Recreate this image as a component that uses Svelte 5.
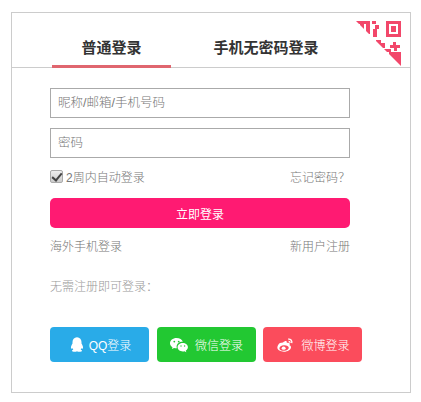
<script>
  let remember = $state(true);
  let tab = $state('normal');
</script>

<main class="page">
  <section class="card">
    <nav class="tabs">
      <button class="tab first" class:active={tab === 'normal'} onclick={() => (tab = 'normal')}>普通登录</button>
      <button class="tab second" class:active={tab === 'phone'} onclick={() => (tab = 'phone')}>手机无密码登录</button>
    </nav>

    <svg class="qr" width="46" height="46" viewBox="0 0 46 46" aria-hidden="true">
      <defs>
        <clipPath id="corner"><polygon points="0,0 46,0 46,46" /></clipPath>
      </defs>
      <g fill="#f2476a" clip-path="url(#corner)">
        <path d="M0 0h14v13h-4V3H0z" />
        <path d="M4 3h4v7H4z" />
        <path d="M16 0h4v3h-4zM19 4h4v4h-4zM17 8h4v8h-4z" />
        <path fill-rule="evenodd" d="M30 0h15v16H30zM33 3v10h9V3z" />
        <path d="M35 5h5v6h-5z" />
        <path d="M20 19h5v3h4v5h-5v-3h-4z" />
        <path d="M37 21h3v3h4v3h-3v3h-3v-3h-4v-3h3z" />
        <path d="M28 28h7v3h-7zM33 31h12v15H33z" />
      </g>
    </svg>

    <form class="form" onsubmit={(e) => e.preventDefault()}>
      <input class="field" type="text" placeholder="昵称/邮箱/手机号码" />
      <input class="field" type="password" placeholder="密码" />

      <div class="row options">
        <label class="remember">
          <input type="checkbox" bind:checked={remember} />
          <span>2周内自动登录</span>
        </label>
        <span>忘记密码？</span>
      </div>

      <button class="submit" type="submit">立即登录</button>

      <div class="row links">
        <span>海外手机登录</span>
        <span>新用户注册</span>
      </div>

      <p class="hint">无需注册即可登录：</p>

      <div class="social">
        <button class="sns qq" type="button">
          <svg width="18" height="18" viewBox="0 0 20 20" aria-hidden="true">
            <path fill="#fff" d="M10 1.500c3.200 0 5 2.400 5 5.300v1.600c.9 1.400 1.900 3.300 1.700 5-.1.900-.7.900-1.500-.2-.2.900-.6 1.700-1.200 2.200 1 .3 1.700.800 1.600 1.300-.1.600-1.500.900-3 .9-1.100 0-2-.2-2.600-.6-.6.400-1.500.6-2.600.6-1.500 0-2.900-.3-3-.9-.1-.5.600-1 1.600-1.300-.6-.5-1-1.300-1.200-2.200-.8 1.100-1.400 1.100-1.500.2-.2-1.700.8-3.600 1.700-5V6.800c0-2.900 1.800-5.300 5-5.300z" />
          </svg>
          <span>QQ登录</span>
        </button>
        <button class="sns wechat" type="button">
          <svg width="20" height="20" viewBox="0 0 20 20" aria-hidden="true">
            <path fill="#fff" d="M7.500 3C3.900 3 1 5.300 1 8.200c0 1.700 1 3.100 2.500 4l-.6 1.900 2.200-1.200c.7.200 1.500.3 2.300.3h.5c-.2-.5-.3-1-.3-1.500 0-2.800 2.600-4.900 5.800-4.900h.4C13.200 4.600 10.600 3 7.500 3z" />
            <path fill="#fff" d="M13.800 8.100c-2.900 0-5.200 1.900-5.200 4.200s2.300 4.200 5.200 4.200c.6 0 1.200-.1 1.800-.3l1.700 1-.5-1.600c1.300-.8 2.100-2 2.100-3.300 0-2.300-2.300-4.200-5.100-4.200z" />
            <circle cx="5.300" cy="6.600" r=".9" fill="#22c832" />
            <circle cx="9.700" cy="6.600" r=".9" fill="#22c832" />
            <circle cx="12" cy="11" r=".7" fill="#22c832" />
            <circle cx="15.600" cy="11" r=".7" fill="#22c832" />
          </svg>
          <span>微信登录</span>
        </button>
        <button class="sns weibo" type="button">
          <svg width="20" height="18" viewBox="0 0 22 20" aria-hidden="true">
            <path fill="#fff" fill-rule="evenodd" d="M8.800 7.200c1.500-1.300 3.200-2 4-1.200.4.400.4 1.100.1 1.900 1.800-.6 3.100-.3 3.400.6.200.6 0 1.200-.4 1.800 1 .3 1.800 1 1.800 2.200 0 2.500-3.600 5-7.900 5-3.600 0-7.300-1.700-7.300-4.600 0-1.500 1-3.400 2.800-5zM9.800 10.300c-2.900.2-5.100 1.800-5 3.500.1 1.700 2.500 2.900 5.400 2.700 2.900-.2 5.100-1.800 5-3.500-.1-1.700-2.500-2.900-5.400-2.700z" />
            <ellipse cx="9.500" cy="13.500" rx="2.200" ry="1.800" fill="#fff" />
            <path fill="none" stroke="#fff" stroke-width="1.500" d="M14.500 3.500c2.600-.5 4.700 1.600 4 4.400M15 6c1-.2 1.800.6 1.500 1.700" />
          </svg>
          <span>微博登录</span>
        </button>
      </div>
    </form>
  </section>
</main>

<style>
  :global(body) {
    background: #fff;
    font-family: "Liberation Sans", "Noto Sans CJK SC", sans-serif;
  }
  .page {
    padding: 12px 10px 9px 11px;
  }
  .card {
    position: relative;
    height: 381px;
    box-sizing: border-box;
    border: 1px solid #ccc;
  }
  .tabs {
    display: flex;
    height: 55px;
    padding-left: 40px;
    border-bottom: 1px solid #ccc;
    box-sizing: border-box;
  }
  .tab {
    height: 55px;
    padding: 14px 0 0;
    border: none;
    border-bottom: 3px solid transparent;
    background: none;
    font: bold 15px "Liberation Sans", "Noto Sans CJK SC", sans-serif;
    color: #333;
    cursor: pointer;
  }
  .first {
    width: 119px;
  }
  .second {
    width: 190px;
  }
  .tab.active {
    border-bottom-color: #e0666f;
  }
  .qr {
    position: absolute;
    top: 8px;
    right: 8px;
  }
  .form {
    display: flex;
    flex-direction: column;
    padding: 20px 60px 0 38px;
  }
  .field {
    height: 30px;
    box-sizing: border-box;
    margin-bottom: 10px;
    padding: 0 7px;
    border: 1px solid #aaa;
    font: 300 12.5px "Liberation Sans", "Noto Sans CJK SC", sans-serif;
    color: #333;
    outline: none;
  }
  .field::placeholder {
    color: #777;
  }
  .row {
    display: flex;
    justify-content: space-between;
    align-items: center;
    font-size: 12px;
    font-weight: 300;
    color: #777;
  }
  .options {
    height: 20px;
    margin-top: -2px;
  }
  .remember {
    display: flex;
    align-items: center;
    gap: 3px;
  }
  .remember input {
    position: relative;
    appearance: none;
    width: 13px;
    height: 13px;
    margin: 0;
    border: 1px solid #aaa;
    border-radius: 2px;
    background: linear-gradient(#eee, #ccc);
  }
  .remember input:checked::after {
    content: "";
    position: absolute;
    left: 3px;
    top: 0;
    width: 4px;
    height: 8px;
    border: solid #444;
    border-width: 0 2px 2px 0;
    transform: rotate(40deg);
  }
  .submit {
    height: 30px;
    margin-top: 12px;
    border: none;
    border-radius: 5px;
    background: #ff1a72;
    color: #fff;
    font: 12px "Liberation Sans", "Noto Sans CJK SC", sans-serif;
    cursor: pointer;
  }
  .links {
    margin-top: 8px;
    height: 18px;
  }
  .hint {
    margin: 24px 0 0;
    font-size: 12px;
    font-weight: 300;
    line-height: 18px;
    color: #999;
  }
  .social {
    display: flex;
    gap: 7.5px;
    margin: 31px -12px 0 0;
  }
  .sns {
    display: flex;
    flex: none;
    align-items: center;
    justify-content: center;
    gap: 6px;
    width: 99px;
    height: 35px;
    padding: 0;
    border: none;
    border-radius: 4px;
    color: #fff;
    font: 300 12px "Liberation Sans", "Noto Sans CJK SC", sans-serif;
    cursor: pointer;
  }
  .qq {
    gap: 3px;
    background: #29abe8;
  }
  .wechat {
    background: #22c832;
  }
  .weibo {
    background: #fb4c5c;
  }
</style>
